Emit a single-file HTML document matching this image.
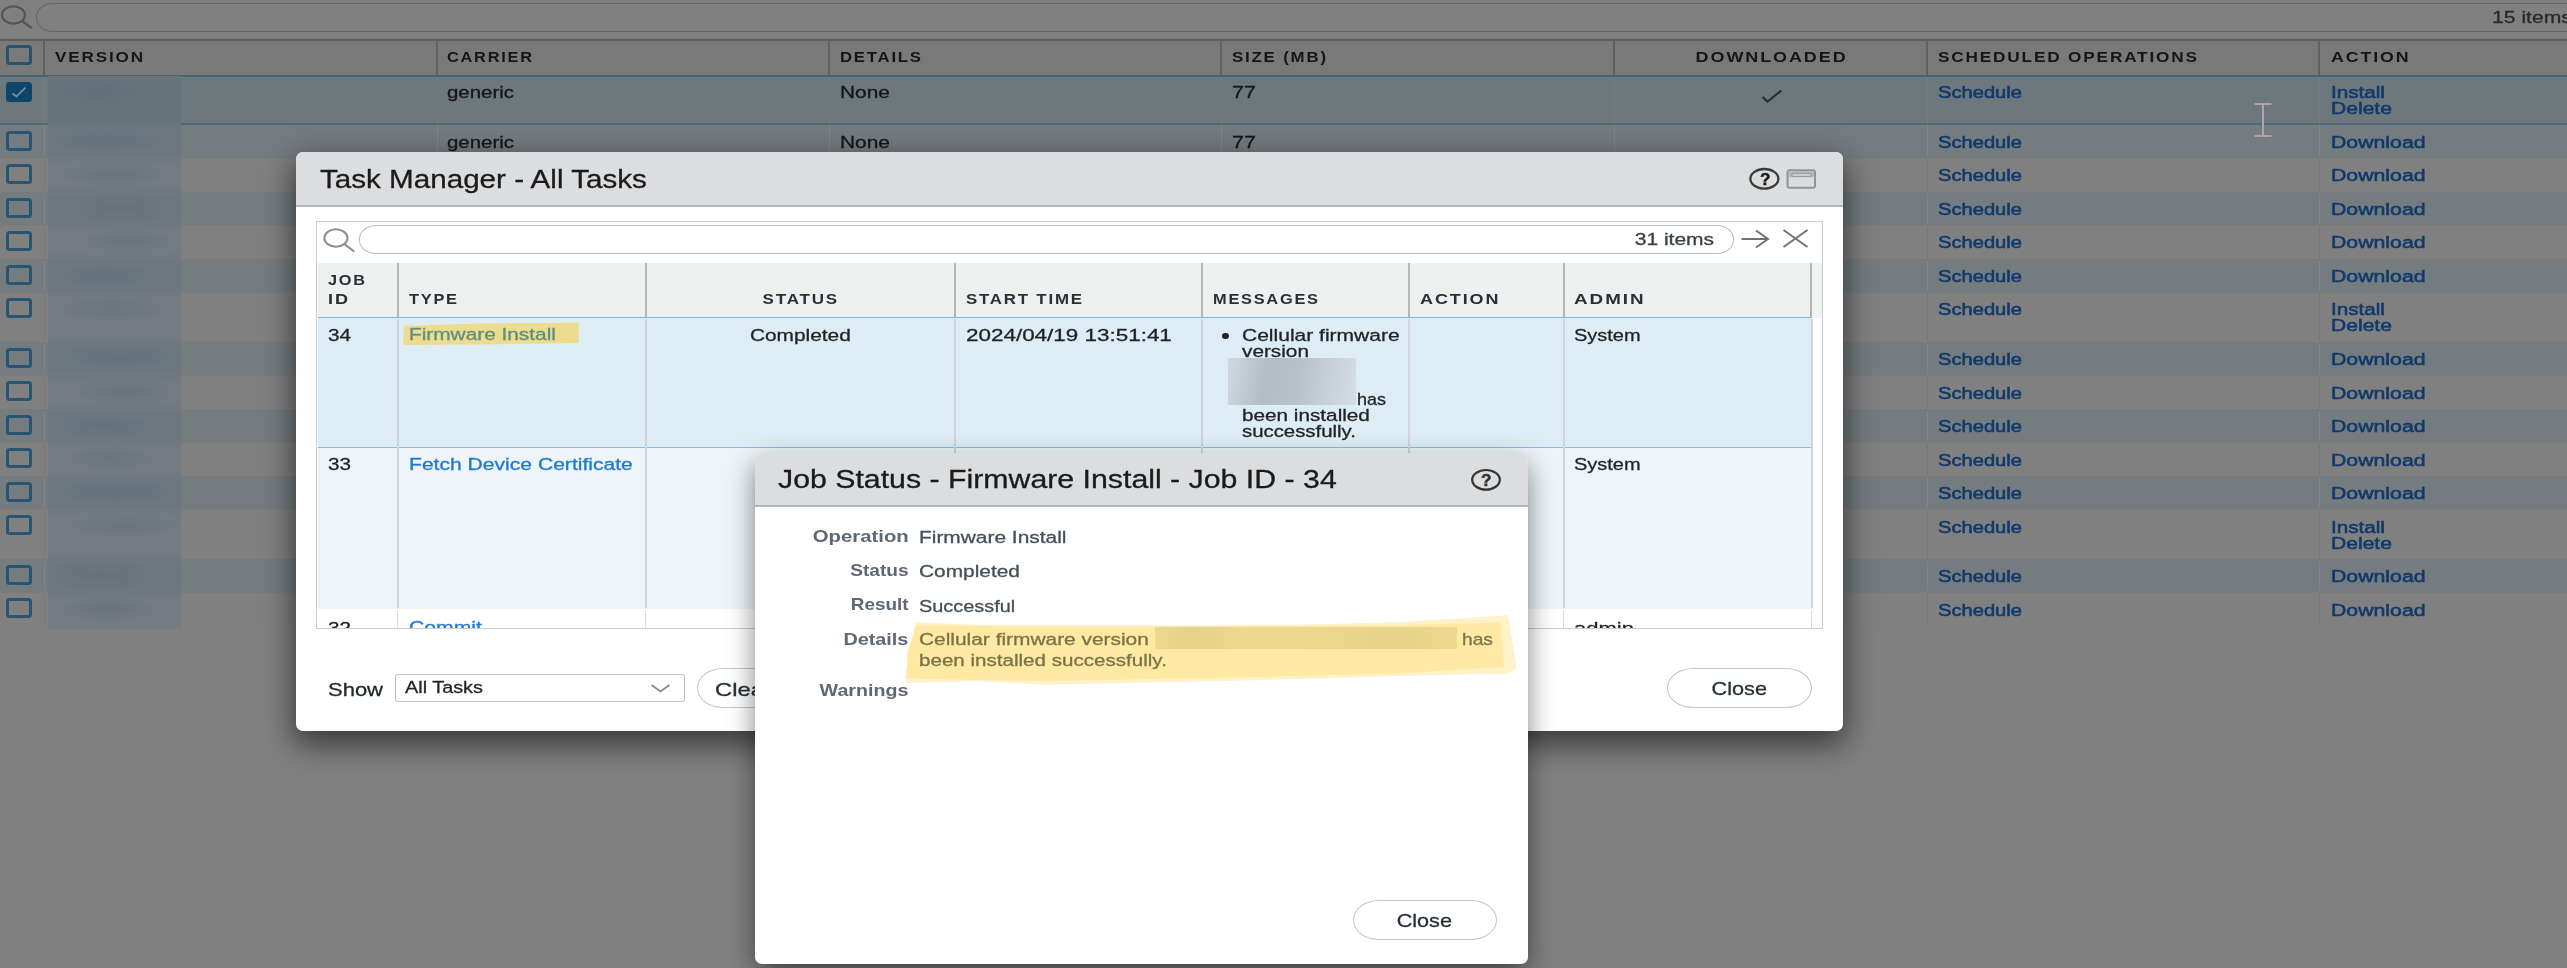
<!DOCTYPE html>
<html lang="en"><head><meta charset="utf-8"><title>Task Manager - All Tasks</title>
<style>
html,body{margin:0;padding:0}
body{width:2567px;height:968px;overflow:hidden;position:relative;background:#808080;font-family:"Liberation Sans",sans-serif}
#root{left:0;top:0;width:2567px;height:968px;overflow:hidden;will-change:transform;opacity:.999;filter:blur(0.55px)}
body div,body svg,.t{position:absolute;display:block}
.t{white-space:nowrap;-webkit-text-stroke:0.3px currentColor}.b{font-weight:bold;-webkit-text-stroke:0}
</style></head><body><div id="root">
<svg style="left:0;top:0" width="40" height="36" viewBox="0 0 40 36"><ellipse cx="13.5" cy="15" rx="11.5" ry="8.6" fill="none" stroke="#555" stroke-width="2.2"/><path d="M22.5 21.5 L31 27.5" stroke="#555" stroke-width="2.4" stroke-linecap="round"/></svg>
<div style="left:35.5px;top:3px;width:2600px;height:27px;border:1.5px solid #666;border-radius:17px/14px;"></div>
<span class="t" style="left:2492px;transform-origin:0 0;top:9.56px;font-size:16.7px;line-height:16.7px;height:16.7px;color:#2a2a2a;transform:scaleX(1.2675);">15 items</span>
<div style="left:0px;top:38.5px;width:2567px;height:36px;background:#797979;border-top:2px solid #5e5f61;"></div>
<div style="left:43px;top:40px;width:2px;height:35px;background:#606163;"></div>
<div style="left:436px;top:40px;width:2px;height:35px;background:#606163;"></div>
<div style="left:828px;top:40px;width:2px;height:35px;background:#606163;"></div>
<div style="left:1220px;top:40px;width:2px;height:35px;background:#606163;"></div>
<div style="left:1613px;top:40px;width:2px;height:35px;background:#606163;"></div>
<div style="left:1926px;top:40px;width:2px;height:35px;background:#606163;"></div>
<div style="left:2318px;top:40px;width:2px;height:35px;background:#606163;"></div>
<div style="left:6px;top:45px;width:26px;height:20px;box-sizing:border-box;border:3.1px solid #28536f;border-radius:3.5px;"></div>
<span class="t b" style="left:55px;transform-origin:0 0;top:49.00px;font-size:15px;line-height:15px;height:15px;color:#161616;letter-spacing:1.6px;transform:scaleX(1.1411);">VERSION</span>
<span class="t b" style="left:447.3px;transform-origin:0 0;top:49.00px;font-size:15px;line-height:15px;height:15px;color:#161616;letter-spacing:1.6px;transform:scaleX(1.0906);">CARRIER</span>
<span class="t b" style="left:840px;transform-origin:0 0;top:49.00px;font-size:15px;line-height:15px;height:15px;color:#161616;letter-spacing:1.6px;transform:scaleX(1.1148);">DETAILS</span>
<span class="t b" style="left:1231.5px;transform-origin:0 0;top:49.00px;font-size:15px;line-height:15px;height:15px;color:#161616;letter-spacing:1.6px;transform:scaleX(1.1240);">SIZE (MB)</span>
<span class="t b" style="left:1707.99px;transform-origin:62.61px 0;top:49.00px;font-size:15px;line-height:15px;height:15px;color:#161616;letter-spacing:1.6px;transform:scaleX(1.1979);">DOWNLOADED</span>
<span class="t b" style="left:1938px;transform-origin:0 0;top:49.00px;font-size:15px;line-height:15px;height:15px;color:#161616;letter-spacing:1.6px;transform:scaleX(1.1461);">SCHEDULED OPERATIONS</span>
<span class="t b" style="left:2330.6px;transform-origin:0 0;top:49.00px;font-size:15px;line-height:15px;height:15px;color:#161616;letter-spacing:1.6px;transform:scaleX(1.1833);">ACTION</span>
<div style="left:0px;top:74.5px;width:2567px;height:50.5px;background:#6d787d;box-sizing:border-box;border-top:2.5px solid #456577;border-bottom:2.5px solid #4b687a;"></div>
<div style="left:43.5px;top:77.5px;width:1.5px;height:46.5px;background:#727b80;"></div>
<div style="left:436.5px;top:77.5px;width:1.5px;height:46.5px;background:#727b80;"></div>
<div style="left:828.5px;top:77.5px;width:1.5px;height:46.5px;background:#727b80;"></div>
<div style="left:1220.5px;top:77.5px;width:1.5px;height:46.5px;background:#727b80;"></div>
<div style="left:1613.5px;top:77.5px;width:1.5px;height:46.5px;background:#727b80;"></div>
<div style="left:1926.5px;top:77.5px;width:1.5px;height:46.5px;background:#727b80;"></div>
<div style="left:2318.5px;top:77.5px;width:1.5px;height:46.5px;background:#727b80;"></div>
<div style="left:6px;top:82px;width:26px;height:19.5px;box-sizing:border-box;background:#0e4669;border:2px solid #0e4669;border-radius:3.5px;"></div>
<svg style="left:6px;top:82px" width="26" height="20" viewBox="0 0 26 20"><path d="M6.5 11.5 L10.5 14.5 L19.5 5.5" fill="none" stroke="#7f96a4" stroke-width="1.6"/></svg>
<span class="t" style="left:447.3px;transform-origin:0 0;top:85.06px;font-size:16.7px;line-height:16.7px;height:16.7px;color:#171717;transform:scaleX(1.2232);">generic</span>
<span class="t" style="left:840px;transform-origin:0 0;top:85.06px;font-size:16.7px;line-height:16.7px;height:16.7px;color:#171717;transform:scaleX(1.2524);">None</span>
<span class="t" style="left:1231.5px;transform-origin:0 0;top:85.06px;font-size:16.7px;line-height:16.7px;height:16.7px;color:#171717;transform:scaleX(1.2920);">77</span>
<span class="t" style="left:1938px;transform-origin:0 0;top:85.06px;font-size:16.7px;line-height:16.7px;height:16.7px;color:#10396c;transform:scaleX(1.2062);-webkit-text-stroke:0.55px #10396c;">Schedule</span>
<span class="t" style="left:2330.6px;transform-origin:0 0;top:85.06px;font-size:16.7px;line-height:16.7px;height:16.7px;color:#10396c;transform:scaleX(1.2378);-webkit-text-stroke:0.55px #10396c;">Install</span>
<span class="t" style="left:2330.6px;transform-origin:0 0;top:101.06px;font-size:16.7px;line-height:16.7px;height:16.7px;color:#10396c;transform:scaleX(1.2636);-webkit-text-stroke:0.55px #10396c;">Delete</span>
<div style="left:0px;top:125px;width:2567px;height:33px;background:#747c7f;"></div>
<div style="left:43.5px;top:127px;width:1.5px;height:30px;background:#7e8689;"></div>
<div style="left:436.5px;top:127px;width:1.5px;height:30px;background:#7e8689;"></div>
<div style="left:828.5px;top:127px;width:1.5px;height:30px;background:#7e8689;"></div>
<div style="left:1220.5px;top:127px;width:1.5px;height:30px;background:#7e8689;"></div>
<div style="left:1613.5px;top:127px;width:1.5px;height:30px;background:#7e8689;"></div>
<div style="left:1926.5px;top:127px;width:1.5px;height:30px;background:#7e8689;"></div>
<div style="left:2318.5px;top:127px;width:1.5px;height:30px;background:#7e8689;"></div>
<div style="left:6px;top:131px;width:26px;height:20px;box-sizing:border-box;border:3.1px solid #285672;border-radius:3.5px;"></div>
<span class="t" style="left:447.3px;transform-origin:0 0;top:135.36px;font-size:16.7px;line-height:16.7px;height:16.7px;color:#171717;transform:scaleX(1.2232);">generic</span>
<span class="t" style="left:840px;transform-origin:0 0;top:135.36px;font-size:16.7px;line-height:16.7px;height:16.7px;color:#171717;transform:scaleX(1.2524);">None</span>
<span class="t" style="left:1231.5px;transform-origin:0 0;top:135.36px;font-size:16.7px;line-height:16.7px;height:16.7px;color:#171717;transform:scaleX(1.2920);">77</span>
<span class="t" style="left:1938px;transform-origin:0 0;top:135.36px;font-size:16.7px;line-height:16.7px;height:16.7px;color:#10396c;transform:scaleX(1.2062);-webkit-text-stroke:0.55px #10396c;">Schedule</span>
<span class="t" style="left:2330.6px;transform-origin:0 0;top:135.36px;font-size:16.7px;line-height:16.7px;height:16.7px;color:#10396c;transform:scaleX(1.2737);-webkit-text-stroke:0.55px #10396c;">Download</span>
<div style="left:0px;top:158px;width:2567px;height:33.5px;background:#808080;border-top:1px solid #7b7b7b;box-sizing:border-box;"></div>
<div style="left:43.5px;top:160px;width:1.5px;height:30.5px;background:#777779;"></div>
<div style="left:436.5px;top:160px;width:1.5px;height:30.5px;background:#777779;"></div>
<div style="left:828.5px;top:160px;width:1.5px;height:30.5px;background:#777779;"></div>
<div style="left:1220.5px;top:160px;width:1.5px;height:30.5px;background:#777779;"></div>
<div style="left:1613.5px;top:160px;width:1.5px;height:30.5px;background:#777779;"></div>
<div style="left:1926.5px;top:160px;width:1.5px;height:30.5px;background:#777779;"></div>
<div style="left:2318.5px;top:160px;width:1.5px;height:30.5px;background:#777779;"></div>
<div style="left:6px;top:164px;width:26px;height:20px;box-sizing:border-box;border:3.1px solid #285672;border-radius:3.5px;"></div>
<span class="t" style="left:1938px;transform-origin:0 0;top:168.36px;font-size:16.7px;line-height:16.7px;height:16.7px;color:#10396c;transform:scaleX(1.2062);-webkit-text-stroke:0.55px #10396c;">Schedule</span>
<span class="t" style="left:2330.6px;transform-origin:0 0;top:168.36px;font-size:16.7px;line-height:16.7px;height:16.7px;color:#10396c;transform:scaleX(1.2737);-webkit-text-stroke:0.55px #10396c;">Download</span>
<div style="left:0px;top:191.5px;width:2567px;height:33.5px;background:#747c7f;"></div>
<div style="left:43.5px;top:193.5px;width:1.5px;height:30.5px;background:#7e8689;"></div>
<div style="left:436.5px;top:193.5px;width:1.5px;height:30.5px;background:#7e8689;"></div>
<div style="left:828.5px;top:193.5px;width:1.5px;height:30.5px;background:#7e8689;"></div>
<div style="left:1220.5px;top:193.5px;width:1.5px;height:30.5px;background:#7e8689;"></div>
<div style="left:1613.5px;top:193.5px;width:1.5px;height:30.5px;background:#7e8689;"></div>
<div style="left:1926.5px;top:193.5px;width:1.5px;height:30.5px;background:#7e8689;"></div>
<div style="left:2318.5px;top:193.5px;width:1.5px;height:30.5px;background:#7e8689;"></div>
<div style="left:6px;top:197.5px;width:26px;height:20px;box-sizing:border-box;border:3.1px solid #285672;border-radius:3.5px;"></div>
<span class="t" style="left:1938px;transform-origin:0 0;top:201.86px;font-size:16.7px;line-height:16.7px;height:16.7px;color:#10396c;transform:scaleX(1.2062);-webkit-text-stroke:0.55px #10396c;">Schedule</span>
<span class="t" style="left:2330.6px;transform-origin:0 0;top:201.86px;font-size:16.7px;line-height:16.7px;height:16.7px;color:#10396c;transform:scaleX(1.2737);-webkit-text-stroke:0.55px #10396c;">Download</span>
<div style="left:0px;top:225px;width:2567px;height:33.5px;background:#808080;border-top:1px solid #7b7b7b;box-sizing:border-box;"></div>
<div style="left:43.5px;top:227px;width:1.5px;height:30.5px;background:#777779;"></div>
<div style="left:436.5px;top:227px;width:1.5px;height:30.5px;background:#777779;"></div>
<div style="left:828.5px;top:227px;width:1.5px;height:30.5px;background:#777779;"></div>
<div style="left:1220.5px;top:227px;width:1.5px;height:30.5px;background:#777779;"></div>
<div style="left:1613.5px;top:227px;width:1.5px;height:30.5px;background:#777779;"></div>
<div style="left:1926.5px;top:227px;width:1.5px;height:30.5px;background:#777779;"></div>
<div style="left:2318.5px;top:227px;width:1.5px;height:30.5px;background:#777779;"></div>
<div style="left:6px;top:231px;width:26px;height:20px;box-sizing:border-box;border:3.1px solid #285672;border-radius:3.5px;"></div>
<span class="t" style="left:1938px;transform-origin:0 0;top:235.36px;font-size:16.7px;line-height:16.7px;height:16.7px;color:#10396c;transform:scaleX(1.2062);-webkit-text-stroke:0.55px #10396c;">Schedule</span>
<span class="t" style="left:2330.6px;transform-origin:0 0;top:235.36px;font-size:16.7px;line-height:16.7px;height:16.7px;color:#10396c;transform:scaleX(1.2737);-webkit-text-stroke:0.55px #10396c;">Download</span>
<div style="left:0px;top:258.5px;width:2567px;height:33.5px;background:#747c7f;"></div>
<div style="left:43.5px;top:260.5px;width:1.5px;height:30.5px;background:#7e8689;"></div>
<div style="left:436.5px;top:260.5px;width:1.5px;height:30.5px;background:#7e8689;"></div>
<div style="left:828.5px;top:260.5px;width:1.5px;height:30.5px;background:#7e8689;"></div>
<div style="left:1220.5px;top:260.5px;width:1.5px;height:30.5px;background:#7e8689;"></div>
<div style="left:1613.5px;top:260.5px;width:1.5px;height:30.5px;background:#7e8689;"></div>
<div style="left:1926.5px;top:260.5px;width:1.5px;height:30.5px;background:#7e8689;"></div>
<div style="left:2318.5px;top:260.5px;width:1.5px;height:30.5px;background:#7e8689;"></div>
<div style="left:6px;top:264.5px;width:26px;height:20px;box-sizing:border-box;border:3.1px solid #285672;border-radius:3.5px;"></div>
<span class="t" style="left:1938px;transform-origin:0 0;top:268.86px;font-size:16.7px;line-height:16.7px;height:16.7px;color:#10396c;transform:scaleX(1.2062);-webkit-text-stroke:0.55px #10396c;">Schedule</span>
<span class="t" style="left:2330.6px;transform-origin:0 0;top:268.86px;font-size:16.7px;line-height:16.7px;height:16.7px;color:#10396c;transform:scaleX(1.2737);-webkit-text-stroke:0.55px #10396c;">Download</span>
<div style="left:0px;top:292px;width:2567px;height:49.69999999999999px;background:#808080;border-top:1px solid #7b7b7b;box-sizing:border-box;"></div>
<div style="left:43.5px;top:294px;width:1.5px;height:46.69999999999999px;background:#777779;"></div>
<div style="left:436.5px;top:294px;width:1.5px;height:46.69999999999999px;background:#777779;"></div>
<div style="left:828.5px;top:294px;width:1.5px;height:46.69999999999999px;background:#777779;"></div>
<div style="left:1220.5px;top:294px;width:1.5px;height:46.69999999999999px;background:#777779;"></div>
<div style="left:1613.5px;top:294px;width:1.5px;height:46.69999999999999px;background:#777779;"></div>
<div style="left:1926.5px;top:294px;width:1.5px;height:46.69999999999999px;background:#777779;"></div>
<div style="left:2318.5px;top:294px;width:1.5px;height:46.69999999999999px;background:#777779;"></div>
<div style="left:6px;top:298px;width:26px;height:20px;box-sizing:border-box;border:3.1px solid #285672;border-radius:3.5px;"></div>
<span class="t" style="left:1938px;transform-origin:0 0;top:302.36px;font-size:16.7px;line-height:16.7px;height:16.7px;color:#10396c;transform:scaleX(1.2062);-webkit-text-stroke:0.55px #10396c;">Schedule</span>
<span class="t" style="left:2330.6px;transform-origin:0 0;top:302.36px;font-size:16.7px;line-height:16.7px;height:16.7px;color:#10396c;transform:scaleX(1.2378);-webkit-text-stroke:0.55px #10396c;">Install</span>
<span class="t" style="left:2330.6px;transform-origin:0 0;top:318.36px;font-size:16.7px;line-height:16.7px;height:16.7px;color:#10396c;transform:scaleX(1.2636);-webkit-text-stroke:0.55px #10396c;">Delete</span>
<div style="left:0px;top:341.7px;width:2567px;height:33.5px;background:#747c7f;"></div>
<div style="left:43.5px;top:343.7px;width:1.5px;height:30.5px;background:#7e8689;"></div>
<div style="left:436.5px;top:343.7px;width:1.5px;height:30.5px;background:#7e8689;"></div>
<div style="left:828.5px;top:343.7px;width:1.5px;height:30.5px;background:#7e8689;"></div>
<div style="left:1220.5px;top:343.7px;width:1.5px;height:30.5px;background:#7e8689;"></div>
<div style="left:1613.5px;top:343.7px;width:1.5px;height:30.5px;background:#7e8689;"></div>
<div style="left:1926.5px;top:343.7px;width:1.5px;height:30.5px;background:#7e8689;"></div>
<div style="left:2318.5px;top:343.7px;width:1.5px;height:30.5px;background:#7e8689;"></div>
<div style="left:6px;top:347.7px;width:26px;height:20px;box-sizing:border-box;border:3.1px solid #285672;border-radius:3.5px;"></div>
<span class="t" style="left:1938px;transform-origin:0 0;top:352.06px;font-size:16.7px;line-height:16.7px;height:16.7px;color:#10396c;transform:scaleX(1.2062);-webkit-text-stroke:0.55px #10396c;">Schedule</span>
<span class="t" style="left:2330.6px;transform-origin:0 0;top:352.06px;font-size:16.7px;line-height:16.7px;height:16.7px;color:#10396c;transform:scaleX(1.2737);-webkit-text-stroke:0.55px #10396c;">Download</span>
<div style="left:0px;top:375.2px;width:2567px;height:33.5px;background:#808080;border-top:1px solid #7b7b7b;box-sizing:border-box;"></div>
<div style="left:43.5px;top:377.2px;width:1.5px;height:30.5px;background:#777779;"></div>
<div style="left:436.5px;top:377.2px;width:1.5px;height:30.5px;background:#777779;"></div>
<div style="left:828.5px;top:377.2px;width:1.5px;height:30.5px;background:#777779;"></div>
<div style="left:1220.5px;top:377.2px;width:1.5px;height:30.5px;background:#777779;"></div>
<div style="left:1613.5px;top:377.2px;width:1.5px;height:30.5px;background:#777779;"></div>
<div style="left:1926.5px;top:377.2px;width:1.5px;height:30.5px;background:#777779;"></div>
<div style="left:2318.5px;top:377.2px;width:1.5px;height:30.5px;background:#777779;"></div>
<div style="left:6px;top:381.2px;width:26px;height:20px;box-sizing:border-box;border:3.1px solid #285672;border-radius:3.5px;"></div>
<span class="t" style="left:1938px;transform-origin:0 0;top:385.56px;font-size:16.7px;line-height:16.7px;height:16.7px;color:#10396c;transform:scaleX(1.2062);-webkit-text-stroke:0.55px #10396c;">Schedule</span>
<span class="t" style="left:2330.6px;transform-origin:0 0;top:385.56px;font-size:16.7px;line-height:16.7px;height:16.7px;color:#10396c;transform:scaleX(1.2737);-webkit-text-stroke:0.55px #10396c;">Download</span>
<div style="left:0px;top:408.7px;width:2567px;height:33.5px;background:#747c7f;"></div>
<div style="left:43.5px;top:410.7px;width:1.5px;height:30.5px;background:#7e8689;"></div>
<div style="left:436.5px;top:410.7px;width:1.5px;height:30.5px;background:#7e8689;"></div>
<div style="left:828.5px;top:410.7px;width:1.5px;height:30.5px;background:#7e8689;"></div>
<div style="left:1220.5px;top:410.7px;width:1.5px;height:30.5px;background:#7e8689;"></div>
<div style="left:1613.5px;top:410.7px;width:1.5px;height:30.5px;background:#7e8689;"></div>
<div style="left:1926.5px;top:410.7px;width:1.5px;height:30.5px;background:#7e8689;"></div>
<div style="left:2318.5px;top:410.7px;width:1.5px;height:30.5px;background:#7e8689;"></div>
<div style="left:6px;top:414.7px;width:26px;height:20px;box-sizing:border-box;border:3.1px solid #285672;border-radius:3.5px;"></div>
<span class="t" style="left:1938px;transform-origin:0 0;top:419.06px;font-size:16.7px;line-height:16.7px;height:16.7px;color:#10396c;transform:scaleX(1.2062);-webkit-text-stroke:0.55px #10396c;">Schedule</span>
<span class="t" style="left:2330.6px;transform-origin:0 0;top:419.06px;font-size:16.7px;line-height:16.7px;height:16.7px;color:#10396c;transform:scaleX(1.2737);-webkit-text-stroke:0.55px #10396c;">Download</span>
<div style="left:0px;top:442.2px;width:2567px;height:33.5px;background:#808080;border-top:1px solid #7b7b7b;box-sizing:border-box;"></div>
<div style="left:43.5px;top:444.2px;width:1.5px;height:30.5px;background:#777779;"></div>
<div style="left:436.5px;top:444.2px;width:1.5px;height:30.5px;background:#777779;"></div>
<div style="left:828.5px;top:444.2px;width:1.5px;height:30.5px;background:#777779;"></div>
<div style="left:1220.5px;top:444.2px;width:1.5px;height:30.5px;background:#777779;"></div>
<div style="left:1613.5px;top:444.2px;width:1.5px;height:30.5px;background:#777779;"></div>
<div style="left:1926.5px;top:444.2px;width:1.5px;height:30.5px;background:#777779;"></div>
<div style="left:2318.5px;top:444.2px;width:1.5px;height:30.5px;background:#777779;"></div>
<div style="left:6px;top:448.2px;width:26px;height:20px;box-sizing:border-box;border:3.1px solid #285672;border-radius:3.5px;"></div>
<span class="t" style="left:1938px;transform-origin:0 0;top:452.56px;font-size:16.7px;line-height:16.7px;height:16.7px;color:#10396c;transform:scaleX(1.2062);-webkit-text-stroke:0.55px #10396c;">Schedule</span>
<span class="t" style="left:2330.6px;transform-origin:0 0;top:452.56px;font-size:16.7px;line-height:16.7px;height:16.7px;color:#10396c;transform:scaleX(1.2737);-webkit-text-stroke:0.55px #10396c;">Download</span>
<div style="left:0px;top:475.7px;width:2567px;height:33.5px;background:#747c7f;"></div>
<div style="left:43.5px;top:477.7px;width:1.5px;height:30.5px;background:#7e8689;"></div>
<div style="left:436.5px;top:477.7px;width:1.5px;height:30.5px;background:#7e8689;"></div>
<div style="left:828.5px;top:477.7px;width:1.5px;height:30.5px;background:#7e8689;"></div>
<div style="left:1220.5px;top:477.7px;width:1.5px;height:30.5px;background:#7e8689;"></div>
<div style="left:1613.5px;top:477.7px;width:1.5px;height:30.5px;background:#7e8689;"></div>
<div style="left:1926.5px;top:477.7px;width:1.5px;height:30.5px;background:#7e8689;"></div>
<div style="left:2318.5px;top:477.7px;width:1.5px;height:30.5px;background:#7e8689;"></div>
<div style="left:6px;top:481.7px;width:26px;height:20px;box-sizing:border-box;border:3.1px solid #285672;border-radius:3.5px;"></div>
<span class="t" style="left:1938px;transform-origin:0 0;top:486.06px;font-size:16.7px;line-height:16.7px;height:16.7px;color:#10396c;transform:scaleX(1.2062);-webkit-text-stroke:0.55px #10396c;">Schedule</span>
<span class="t" style="left:2330.6px;transform-origin:0 0;top:486.06px;font-size:16.7px;line-height:16.7px;height:16.7px;color:#10396c;transform:scaleX(1.2737);-webkit-text-stroke:0.55px #10396c;">Download</span>
<div style="left:0px;top:509.2px;width:2567px;height:49.69999999999999px;background:#808080;border-top:1px solid #7b7b7b;box-sizing:border-box;"></div>
<div style="left:43.5px;top:511.2px;width:1.5px;height:46.69999999999999px;background:#777779;"></div>
<div style="left:436.5px;top:511.2px;width:1.5px;height:46.69999999999999px;background:#777779;"></div>
<div style="left:828.5px;top:511.2px;width:1.5px;height:46.69999999999999px;background:#777779;"></div>
<div style="left:1220.5px;top:511.2px;width:1.5px;height:46.69999999999999px;background:#777779;"></div>
<div style="left:1613.5px;top:511.2px;width:1.5px;height:46.69999999999999px;background:#777779;"></div>
<div style="left:1926.5px;top:511.2px;width:1.5px;height:46.69999999999999px;background:#777779;"></div>
<div style="left:2318.5px;top:511.2px;width:1.5px;height:46.69999999999999px;background:#777779;"></div>
<div style="left:6px;top:515.2px;width:26px;height:20px;box-sizing:border-box;border:3.1px solid #285672;border-radius:3.5px;"></div>
<span class="t" style="left:1938px;transform-origin:0 0;top:519.56px;font-size:16.7px;line-height:16.7px;height:16.7px;color:#10396c;transform:scaleX(1.2062);-webkit-text-stroke:0.55px #10396c;">Schedule</span>
<span class="t" style="left:2330.6px;transform-origin:0 0;top:519.56px;font-size:16.7px;line-height:16.7px;height:16.7px;color:#10396c;transform:scaleX(1.2378);-webkit-text-stroke:0.55px #10396c;">Install</span>
<span class="t" style="left:2330.6px;transform-origin:0 0;top:535.56px;font-size:16.7px;line-height:16.7px;height:16.7px;color:#10396c;transform:scaleX(1.2636);-webkit-text-stroke:0.55px #10396c;">Delete</span>
<div style="left:0px;top:558.9px;width:2567px;height:33.5px;background:#747c7f;"></div>
<div style="left:43.5px;top:560.9px;width:1.5px;height:30.5px;background:#7e8689;"></div>
<div style="left:436.5px;top:560.9px;width:1.5px;height:30.5px;background:#7e8689;"></div>
<div style="left:828.5px;top:560.9px;width:1.5px;height:30.5px;background:#7e8689;"></div>
<div style="left:1220.5px;top:560.9px;width:1.5px;height:30.5px;background:#7e8689;"></div>
<div style="left:1613.5px;top:560.9px;width:1.5px;height:30.5px;background:#7e8689;"></div>
<div style="left:1926.5px;top:560.9px;width:1.5px;height:30.5px;background:#7e8689;"></div>
<div style="left:2318.5px;top:560.9px;width:1.5px;height:30.5px;background:#7e8689;"></div>
<div style="left:6px;top:564.9px;width:26px;height:20px;box-sizing:border-box;border:3.1px solid #285672;border-radius:3.5px;"></div>
<span class="t" style="left:1938px;transform-origin:0 0;top:569.26px;font-size:16.7px;line-height:16.7px;height:16.7px;color:#10396c;transform:scaleX(1.2062);-webkit-text-stroke:0.55px #10396c;">Schedule</span>
<span class="t" style="left:2330.6px;transform-origin:0 0;top:569.26px;font-size:16.7px;line-height:16.7px;height:16.7px;color:#10396c;transform:scaleX(1.2737);-webkit-text-stroke:0.55px #10396c;">Download</span>
<div style="left:0px;top:592.4px;width:2567px;height:33.5px;background:#808080;border-top:1px solid #7b7b7b;box-sizing:border-box;"></div>
<div style="left:43.5px;top:594.4px;width:1.5px;height:30.5px;background:#777779;"></div>
<div style="left:436.5px;top:594.4px;width:1.5px;height:30.5px;background:#777779;"></div>
<div style="left:828.5px;top:594.4px;width:1.5px;height:30.5px;background:#777779;"></div>
<div style="left:1220.5px;top:594.4px;width:1.5px;height:30.5px;background:#777779;"></div>
<div style="left:1613.5px;top:594.4px;width:1.5px;height:30.5px;background:#777779;"></div>
<div style="left:1926.5px;top:594.4px;width:1.5px;height:30.5px;background:#777779;"></div>
<div style="left:2318.5px;top:594.4px;width:1.5px;height:30.5px;background:#777779;"></div>
<div style="left:6px;top:598.4px;width:26px;height:20px;box-sizing:border-box;border:3.1px solid #285672;border-radius:3.5px;"></div>
<span class="t" style="left:1938px;transform-origin:0 0;top:602.76px;font-size:16.7px;line-height:16.7px;height:16.7px;color:#10396c;transform:scaleX(1.2062);-webkit-text-stroke:0.55px #10396c;">Schedule</span>
<span class="t" style="left:2330.6px;transform-origin:0 0;top:602.76px;font-size:16.7px;line-height:16.7px;height:16.7px;color:#10396c;transform:scaleX(1.2737);-webkit-text-stroke:0.55px #10396c;">Download</span>
<svg style="left:1758px;top:86px" width="30" height="20" viewBox="0 0 30 20"><path d="M4.5 11 L9.5 15.5 L23.5 4.5" fill="none" stroke="#2b2f31" stroke-width="2.2"/></svg>
<div style="left:47.5px;top:75.5px;width:133.5px;height:553px;background:radial-gradient(ellipse 46px 13px at 52px 16.0px,rgba(86,100,118,.32),rgba(86,100,118,0) 100%),radial-gradient(ellipse 59px 13px at 59px 65.5px,rgba(86,100,118,.32),rgba(86,100,118,0) 100%),radial-gradient(ellipse 56px 13px at 66px 98.5px,rgba(86,100,118,.32),rgba(86,100,118,0) 100%),radial-gradient(ellipse 53px 13px at 73px 132.0px,rgba(86,100,118,.32),rgba(86,100,118,0) 100%),radial-gradient(ellipse 50px 13px at 80px 165.5px,rgba(86,100,118,.32),rgba(86,100,118,0) 100%),radial-gradient(ellipse 47px 13px at 57px 199.0px,rgba(86,100,118,.32),rgba(86,100,118,0) 100%),radial-gradient(ellipse 60px 13px at 64px 232.5px,rgba(86,100,118,.32),rgba(86,100,118,0) 100%),radial-gradient(ellipse 57px 13px at 71px 282.2px,rgba(86,100,118,.32),rgba(86,100,118,0) 100%),radial-gradient(ellipse 54px 13px at 78px 315.7px,rgba(86,100,118,.32),rgba(86,100,118,0) 100%),radial-gradient(ellipse 51px 13px at 55px 349.2px,rgba(86,100,118,.32),rgba(86,100,118,0) 100%),radial-gradient(ellipse 48px 13px at 62px 382.7px,rgba(86,100,118,.32),rgba(86,100,118,0) 100%),radial-gradient(ellipse 61px 13px at 69px 416.2px,rgba(86,100,118,.32),rgba(86,100,118,0) 100%),radial-gradient(ellipse 58px 13px at 76px 449.7px,rgba(86,100,118,.32),rgba(86,100,118,0) 100%),radial-gradient(ellipse 55px 13px at 53px 499.4px,rgba(86,100,118,.32),rgba(86,100,118,0) 100%),radial-gradient(ellipse 52px 13px at 60px 532.9px,rgba(86,100,118,.32),rgba(86,100,118,0) 100%),linear-gradient(180deg,#67737b 1.27%,#67737b 7.69%,#6c777f 10.22%,#6c777f 13.65%,#747b82 16.18%,#747b82 19.71%,#6c777f 22.24%,#6c777f 25.77%,#747b82 28.30%,#747b82 31.83%,#6c777f 34.36%,#6c777f 37.88%,#747b82 40.42%,#747b82 46.87%,#6c777f 49.40%,#6c777f 52.93%,#747b82 55.46%,#747b82 58.99%,#6c777f 61.52%,#6c777f 65.05%,#747b82 67.58%,#747b82 71.10%,#6c777f 73.63%,#6c777f 77.16%,#747b82 79.69%,#747b82 86.15%,#6c777f 88.68%,#6c777f 92.21%,#747b82 94.74%,#747b82 98.26%);"></div>
<svg style="left:2252px;top:101px" width="22" height="38" viewBox="0 0 22 38"><path d="M2.5 3 H19.5 M11 3 V35 M2.5 35 H19.5" fill="none" stroke="#aea5a5" stroke-width="2"/></svg>
<div style="left:296px;top:152px;width:1547px;height:578.5px;background:#fff;border-radius:7px;box-shadow:0 11px 30px 3px rgba(0,0,0,.55);"></div>
<div style="left:296px;top:152px;width:1547px;height:52.5px;background:#dcdddf;border-radius:7px 7px 0 0;border-bottom:2px solid #b3b7ba;"></div>
<span class="t" style="left:320px;transform-origin:0 0;top:167.30px;font-size:25.4px;line-height:25.4px;height:25.4px;color:#1b1b1b;transform:scaleX(1.1659);">Task Manager - All Tasks</span>
<svg style="left:1746px;top:165px" width="74" height="28" viewBox="0 0 74 28"><ellipse cx="18.4" cy="13.8" rx="14" ry="9.8" fill="none" stroke="#3c3c3c" stroke-width="2.3"/><rect x="41.6" y="5.3" width="27.4" height="17.4" rx="2" fill="none" stroke="#8e9397" stroke-width="2"/><rect x="42.6" y="6.3" width="25.4" height="6" fill="#b4b8bb"/><rect x="45.8" y="8.4" width="19.6" height="3" rx="1.5" fill="#cdd0d2" stroke="#8e9397" stroke-width="0.9"/></svg>
<span class="t b" style="left:1759.81px;transform-origin:5.19px 0;top:171.41px;font-size:17px;line-height:17px;height:17px;color:#1c1c1c;transform:scaleX(1.0111);-webkit-text-stroke:0.5px #1c1c1c;">?</span>
<div style="left:315.6px;top:220.8px;width:1507.6px;height:408px;box-sizing:border-box;border:1.8px solid #cbced0;"></div>
<svg style="left:322px;top:226px" width="34" height="28" viewBox="0 0 34 28"><ellipse cx="13.9" cy="12" rx="11.6" ry="8.7" fill="none" stroke="#8b8f92" stroke-width="2"/><path d="M22.8 18.3 L31.5 25" stroke="#8b8f92" stroke-width="2.2" stroke-linecap="round"/></svg>
<div style="left:359px;top:225px;width:1375px;height:29px;box-sizing:border-box;border:1.5px solid #b9bcbf;border-radius:17px/14px;"></div>
<span class="t" style="right:852.5px;transform-origin:100% 0;top:232.26px;font-size:16.7px;line-height:16.7px;height:16.7px;color:#3a3f44;transform:scaleX(1.2580);">31 items</span>
<svg style="left:1738px;top:226px" width="74" height="26" viewBox="0 0 74 26"><path d="M3.5 13 H29.5 M18 4.5 L30 13 L18 21.5" fill="none" stroke="#6f7276" stroke-width="2"/><path d="M45.5 4 L69.5 21 M69.5 4 L45.5 21" fill="none" stroke="#6f7276" stroke-width="2"/></svg>
<div style="left:317.5px;top:262.5px;width:1504px;height:55px;background:#eef0f0;"></div>
<div style="left:1812px;top:262.5px;width:10px;height:55px;background:#f1f2f2;"></div>
<div style="left:396.5px;top:263px;width:2.2px;height:54px;background:#b4b7ba;"></div>
<div style="left:644.5px;top:263px;width:2.2px;height:54px;background:#b4b7ba;"></div>
<div style="left:953.5px;top:263px;width:2.2px;height:54px;background:#b4b7ba;"></div>
<div style="left:1200.5px;top:263px;width:2.2px;height:54px;background:#b4b7ba;"></div>
<div style="left:1407.5px;top:263px;width:2.2px;height:54px;background:#b4b7ba;"></div>
<div style="left:1562.5px;top:263px;width:2.2px;height:54px;background:#b4b7ba;"></div>
<div style="left:1809.5px;top:263px;width:2.2px;height:54px;background:#b4b7ba;"></div>
<span class="t b" style="left:327.8px;transform-origin:0 0;top:271.70px;font-size:15px;line-height:15px;height:15px;color:#2a2f36;letter-spacing:1.6px;transform:scaleX(1.0869);">JOB</span>
<span class="t b" style="left:327.8px;transform-origin:0 0;top:290.90px;font-size:15px;line-height:15px;height:15px;color:#2a2f36;letter-spacing:1.6px;transform:scaleX(1.2048);">ID</span>
<span class="t b" style="left:409.2px;transform-origin:0 0;top:290.90px;font-size:15px;line-height:15px;height:15px;color:#2a2f36;letter-spacing:1.6px;transform:scaleX(1.0914);">TYPE</span>
<span class="t b" style="left:767.31px;transform-origin:32.89px 0;top:290.90px;font-size:15px;line-height:15px;height:15px;color:#2a2f36;letter-spacing:1.6px;transform:scaleX(1.1342);">STATUS</span>
<span class="t b" style="left:965.8px;transform-origin:0 0;top:290.90px;font-size:15px;line-height:15px;height:15px;color:#2a2f36;letter-spacing:1.6px;transform:scaleX(1.1231);">START TIME</span>
<span class="t b" style="left:1213px;transform-origin:0 0;top:290.90px;font-size:15px;line-height:15px;height:15px;color:#2a2f36;letter-spacing:1.6px;transform:scaleX(1.0912);">MESSAGES</span>
<span class="t b" style="left:1419.6px;transform-origin:0 0;top:290.90px;font-size:15px;line-height:15px;height:15px;color:#2a2f36;letter-spacing:1.6px;transform:scaleX(1.1970);">ACTION</span>
<span class="t b" style="left:1574.1px;transform-origin:0 0;top:290.90px;font-size:15px;line-height:15px;height:15px;color:#2a2f36;letter-spacing:1.6px;transform:scaleX(1.2527);">ADMIN</span>
<div style="left:317.5px;top:317px;width:1494px;height:131px;background:#deedf5;box-sizing:border-box;border-top:1.7px solid #80bbe2;border-bottom:1.7px solid #84bee4;"></div>
<div style="left:317.5px;top:448px;width:1494px;height:160.5px;background:#edf5f8;"></div>
<div style="left:396.7px;top:319px;width:1.9px;height:289px;background:#d0d5d9;"></div>
<div style="left:397px;top:611px;width:1.3px;height:17px;background:#d9dcde;"></div>
<div style="left:644.7px;top:319px;width:1.9px;height:289px;background:#d0d5d9;"></div>
<div style="left:645px;top:611px;width:1.3px;height:17px;background:#d9dcde;"></div>
<div style="left:953.7px;top:319px;width:1.9px;height:289px;background:#d0d5d9;"></div>
<div style="left:954px;top:611px;width:1.3px;height:17px;background:#d9dcde;"></div>
<div style="left:1200.7px;top:319px;width:1.9px;height:289px;background:#d0d5d9;"></div>
<div style="left:1201px;top:611px;width:1.3px;height:17px;background:#d9dcde;"></div>
<div style="left:1407.7px;top:319px;width:1.9px;height:289px;background:#d0d5d9;"></div>
<div style="left:1408px;top:611px;width:1.3px;height:17px;background:#d9dcde;"></div>
<div style="left:1562.7px;top:319px;width:1.9px;height:289px;background:#d0d5d9;"></div>
<div style="left:1563px;top:611px;width:1.3px;height:17px;background:#d9dcde;"></div>
<div style="left:1810.7px;top:319px;width:1.9px;height:289px;background:#d0d5d9;"></div>
<div style="left:1811px;top:611px;width:1.3px;height:17px;background:#d9dcde;"></div>
<svg style="left:0;top:0" width="2567" height="968" viewBox="0 0 2567 968"><path d="M404.1 325.7 L480 323.6 L578.8 322.8 L578.8 342.9 L500 344.2 L403.2 345 Z" fill="#ecdc8e"/></svg>
<span class="t" style="left:327.8px;transform-origin:0 0;top:327.56px;font-size:16.7px;line-height:16.7px;height:16.7px;color:#1f2226;transform:scaleX(1.2381);">34</span>
<span class="t" style="left:409.2px;transform-origin:0 0;top:327.06px;font-size:16.7px;line-height:16.7px;height:16.7px;color:#5e8f80;transform:scaleX(1.2474);">Firmware Install</span>
<span class="t" style="left:760.22px;transform-origin:40.38px 0;top:327.56px;font-size:16.7px;line-height:16.7px;height:16.7px;color:#1f2226;transform:scaleX(1.2506);">Completed</span>
<span class="t" style="left:965.8px;transform-origin:0 0;top:327.56px;font-size:16.7px;line-height:16.7px;height:16.7px;color:#1f2226;transform:scaleX(1.3444);">2024/04/19 13:51:41</span>
<div style="left:1221.5px;top:332.5px;width:7px;height:6.5px;background:#1f2226;border-radius:50%;"></div>
<span class="t" style="left:1242px;transform-origin:0 0;top:328.06px;font-size:16.7px;line-height:16.7px;height:16.7px;color:#1f2226;transform:scaleX(1.2596);">Cellular firmware</span>
<span class="t" style="left:1242px;transform-origin:0 0;top:343.96px;font-size:16.7px;line-height:16.7px;height:16.7px;color:#1f2226;transform:scaleX(1.2445);">version</span>
<span class="t" style="left:1356.5px;transform-origin:0 0;top:392.06px;font-size:16.7px;line-height:16.7px;height:16.7px;color:#1f2226;transform:scaleX(1.0770);">has</span>
<span class="t" style="left:1242px;transform-origin:0 0;top:408.06px;font-size:16.7px;line-height:16.7px;height:16.7px;color:#1f2226;transform:scaleX(1.2419);">been installed</span>
<span class="t" style="left:1242px;transform-origin:0 0;top:424.16px;font-size:16.7px;line-height:16.7px;height:16.7px;color:#1f2226;transform:scaleX(1.2202);">successfully.</span>
<div style="left:1228px;top:358.3px;width:128px;height:46.7px;background:linear-gradient(100deg,#cfd9df 0,#b3bdc3 30%,#b9c2c8 55%,#c9d2d8 80%,#d5dee4 100%);"></div>
<span class="t" style="left:1574.1px;transform-origin:0 0;top:327.56px;font-size:16.7px;line-height:16.7px;height:16.7px;color:#1f2226;transform:scaleX(1.1961);">System</span>
<span class="t" style="left:327.8px;transform-origin:0 0;top:457.06px;font-size:16.7px;line-height:16.7px;height:16.7px;color:#1f2226;transform:scaleX(1.2381);">33</span>
<span class="t" style="left:409.2px;transform-origin:0 0;top:456.56px;font-size:16.7px;line-height:16.7px;height:16.7px;color:#1f78d2;transform:scaleX(1.2636);">Fetch Device Certificate</span>
<span class="t" style="left:1574.1px;transform-origin:0 0;top:457.06px;font-size:16.7px;line-height:16.7px;height:16.7px;color:#1f2226;transform:scaleX(1.1961);">System</span>
<div style="left:317px;top:610px;width:1500px;height:17.8px;overflow:hidden">
<span class="t" style="left:10.800000000000011px;transform-origin:0 0;top:10.56px;font-size:16.7px;line-height:16.7px;height:16.7px;color:#1f2226;transform:scaleX(1.2381);">32</span>
<span class="t" style="left:91.80000000000001px;transform-origin:0 0;top:10.06px;font-size:16.7px;line-height:16.7px;height:16.7px;color:#1f78d2;transform:scaleX(1.2691);">Commit</span>
<span class="t" style="left:1257.1px;transform-origin:0 0;top:10.56px;font-size:16.7px;line-height:16.7px;height:16.7px;color:#1f2226;transform:scaleX(1.3191);">admin</span>
</div>
<span class="t" style="left:328px;transform-origin:0 0;top:680.32px;font-size:19px;line-height:19px;height:19px;color:#24282c;transform:scaleX(1.1572);">Show</span>
<div style="left:395px;top:673.5px;width:289.5px;height:28.5px;box-sizing:border-box;border:1.5px solid #b9bdc1;border-radius:3px;"></div>
<span class="t" style="left:405px;transform-origin:0 0;top:680.36px;font-size:16.7px;line-height:16.7px;height:16.7px;color:#1f2226;transform:scaleX(1.1893);">All Tasks</span>
<svg style="left:648px;top:680px" width="26" height="16" viewBox="0 0 26 16"><path d="M3.5 5 L12.5 11.5 L21.5 5" fill="none" stroke="#85898d" stroke-width="1.8"/></svg>
<div style="left:697px;top:668px;width:180px;height:39.5px;box-sizing:border-box;border:1.5px solid #c3c6c9;border-radius:26px/20px;"></div>
<span class="t" style="left:714.6px;transform-origin:0 0;top:680.32px;font-size:19px;line-height:19px;height:19px;color:#2a3038;transform:scaleX(1.2500);">Clear Commit Queue</span>
<div style="left:1667px;top:668px;width:144.5px;height:39.5px;box-sizing:border-box;border:1.5px solid #c3c6c9;border-radius:26px/20px;"></div>
<span class="t" style="left:1715.11px;transform-origin:24.29px 0;top:679.42px;font-size:19px;line-height:19px;height:19px;color:#2a3038;transform:scaleX(1.1404);">Close</span>
<div style="left:754.5px;top:452.5px;width:773.5px;height:511px;background:#fff;border-radius:7px;box-shadow:0 10px 28px -1px rgba(0,0,0,.52);"></div>
<div style="left:754.5px;top:452.5px;width:773.5px;height:52.5px;background:#dcdddf;border-radius:7px 7px 0 0;border-bottom:2px solid #b3b7ba;"></div>
<span class="t" style="left:777.6px;transform-origin:0 0;top:466.87px;font-size:25.2px;line-height:25.2px;height:25.2px;color:#1b1b1b;transform:scaleX(1.2023);">Job Status - Firmware Install - Job ID - 34</span>
<svg style="left:1468px;top:466px" width="36" height="28" viewBox="0 0 36 28"><ellipse cx="18" cy="13.8" rx="13.8" ry="9.8" fill="none" stroke="#333" stroke-width="2.2"/></svg>
<span class="t b" style="left:1481.11px;transform-origin:5.19px 0;top:472.41px;font-size:17px;line-height:17px;height:17px;color:#333;transform:scaleX(1.0111);-webkit-text-stroke:0.5px #333;">?</span>
<svg style="left:0;top:0" width="2567" height="968" viewBox="0 0 2567 968"><path d="M915.3 622.3 L991 625.3 L1143 625.3 L1295 624.8 L1396.5 622.3 L1507.9 615.2 L1516.7 668.4 L1506.6 673.4 L1396.5 676 L1244.5 680.5 L1042 684.8 L978.6 681 L905.7 683.1 L905.7 670.9 Z" fill="#fff1c8"/><path d="M916.6 625.6 L1143 626.6 L1396.5 625.3 L1500.3 622.3 L1504.1 667.1 L1396.5 673.4 L1244.5 677.2 L1042 681 L906.5 678.5 L907.7 650.6 Z" fill="#ffe9a3"/></svg>
<div style="left:1155px;top:626.5px;width:302px;height:22.3px;background:linear-gradient(90deg,#ecd88f 0,#e6d188 12%,#ecd88f 30%,#ead68d 60%,#e7d289 80%,#edd990 100%);"></div>
<span class="t b" style="right:1658.7px;transform-origin:100% 0;top:528.69px;font-size:16.9px;line-height:16.9px;height:16.9px;color:#5d6875;transform:scaleX(1.2028);">Operation</span>
<span class="t" style="left:919.3px;transform-origin:0 0;top:530.09px;font-size:16.9px;line-height:16.9px;height:16.9px;color:#464f59;transform:scaleX(1.2368);">Firmware Install</span>
<span class="t b" style="right:1658.7px;transform-origin:100% 0;top:562.79px;font-size:16.9px;line-height:16.9px;height:16.9px;color:#5d6875;transform:scaleX(1.1306);">Status</span>
<span class="t" style="left:919.3px;transform-origin:0 0;top:564.29px;font-size:16.9px;line-height:16.9px;height:16.9px;color:#464f59;transform:scaleX(1.2358);">Completed</span>
<span class="t b" style="right:1658.7px;transform-origin:100% 0;top:597.49px;font-size:16.9px;line-height:16.9px;height:16.9px;color:#5d6875;transform:scaleX(1.1191);">Result</span>
<span class="t" style="left:919.3px;transform-origin:0 0;top:598.89px;font-size:16.9px;line-height:16.9px;height:16.9px;color:#464f59;transform:scaleX(1.1784);">Successful</span>
<span class="t b" style="right:1658.7px;transform-origin:100% 0;top:631.59px;font-size:16.9px;line-height:16.9px;height:16.9px;color:#5d6875;transform:scaleX(1.1728);">Details</span>
<span class="t" style="left:919.3px;transform-origin:0 0;top:631.59px;font-size:16.9px;line-height:16.9px;height:16.9px;color:#7a7346;transform:scaleX(1.2368);">Cellular firmware version</span>
<span class="t" style="left:1462.4px;transform-origin:0 0;top:631.59px;font-size:16.9px;line-height:16.9px;height:16.9px;color:#7a7346;transform:scaleX(1.1377);">has</span>
<span class="t" style="left:919.3px;transform-origin:0 0;top:653.19px;font-size:16.9px;line-height:16.9px;height:16.9px;color:#7a7346;transform:scaleX(1.2184);">been installed successfully.</span>
<span class="t b" style="right:1658.7px;transform-origin:100% 0;top:682.79px;font-size:16.9px;line-height:16.9px;height:16.9px;color:#5d6875;transform:scaleX(1.1628);">Warnings</span>
<div style="left:1352.5px;top:899.8px;width:144px;height:39.8px;box-sizing:border-box;border:1.5px solid #c3c6c9;border-radius:26px/20px;"></div>
<span class="t" style="left:1399.91px;transform-origin:24.29px 0;top:911.12px;font-size:19px;line-height:19px;height:19px;color:#2a3038;transform:scaleX(1.1384);">Close</span>
</div></body></html>
